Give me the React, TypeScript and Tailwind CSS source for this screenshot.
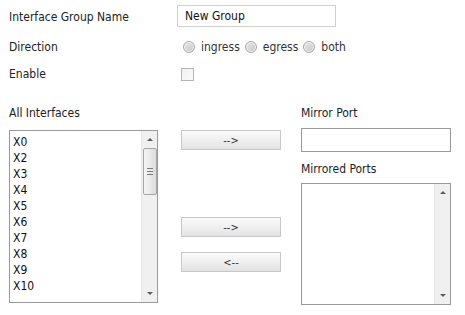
import React from 'react'

const font = { fontFamily: '"DejaVu Sans Condensed", "Liberation Sans", sans-serif' }

const interfaces = ['X0', 'X2', 'X3', 'X4', 'X5', 'X6', 'X7', 'X8', 'X9', 'X10']

function Radio({ label }: { label: string }) {
  return (
    <span className="flex items-center gap-[6px]">
      <span className="w-[12px] h-[12px] rounded-full border border-[#a8a8a8] bg-gradient-to-br from-[#e6e6e6] to-[#c9c9c9] shadow-[inset_0_0_0_1px_#f4f4f4]" />
      <span className="text-[#333]">{label}</span>
    </span>
  )
}

function ScrollTrack({ thumb }: { thumb?: boolean }) {
  return (
    <div className="w-[16px] h-full bg-[#f0f0f0] border-l border-[#e6e6e6] flex flex-col items-center">
      <div className="h-[17px] flex items-center justify-center">
        <span className="w-0 h-0 border-l-[3px] border-r-[3px] border-b-[3px] border-l-transparent border-r-transparent border-b-[#5a5a5a]" />
      </div>
      {thumb && (
        <div className="w-[14px] h-[47px] rounded-[2px] border border-[#a5a5a5] bg-gradient-to-r from-[#f5f5f5] to-[#dcdcdc] flex flex-col items-center justify-center gap-[2px]">
          <span className="w-[6px] h-px bg-[#7a7a7a]" />
          <span className="w-[6px] h-px bg-[#7a7a7a]" />
          <span className="w-[6px] h-px bg-[#7a7a7a]" />
        </div>
      )}
      <div className="flex-1" />
      <div className="h-[17px] flex items-center justify-center">
        <span className="w-0 h-0 border-l-[3px] border-r-[3px] border-t-[3px] border-l-transparent border-r-transparent border-t-[#5a5a5a]" />
      </div>
    </div>
  )
}

function ArrowButton({ label }: { label: string }) {
  return (
    <button className="w-[100px] h-[20px] border border-[#c8c8c8] bg-gradient-to-b from-[#fbfbfb] to-[#e3e3e3] text-[11px] text-[#333] leading-none">
      {label}
    </button>
  )
}

export default function App() {
  return (
    <div className="w-[465px] h-[315px] bg-white text-[12px] text-[#222] pl-[9px] pt-[5px]" style={font}>
      {/* Top form rows */}
      <div className="flex items-center h-[22px]">
        <span className="w-[168px] pt-[2px]">Interface Group Name</span>
        <div className="w-[159px] h-[22px] border border-[#cfcfcf] flex items-center px-[7px] text-[#111]">New Group</div>
      </div>
      <div className="flex items-center h-[20px] mt-[10px]">
        <span className="w-[174px]">Direction</span>
        <div className="flex items-center gap-[5px]">
          <Radio label="ingress" />
          <Radio label="egress" />
          <Radio label="both" />
        </div>
      </div>
      <div className="flex items-center h-[20px] mt-[7px]">
        <span className="w-[172px]">Enable</span>
        <span className="w-[13px] h-[13px] border border-[#b5b5b5] bg-gradient-to-br from-[#f0f0f0] to-[#fafafa]" />
      </div>

      {/* Interface lists */}
      <div className="flex mt-[21px]">
        <div className="w-[149px] flex flex-col">
          <span className="h-[16px] leading-[16px]">All Interfaces</span>
          <div className="mt-[9px] h-[173px] border border-[#9a9a9a] flex">
            <div className="flex-1 pl-[3px] pt-[3px] text-[#111]">
              {interfaces.map(i => (
                <div key={i} className="h-[16px] leading-[16px]">{i}</div>
              ))}
            </div>
            <ScrollTrack thumb />
          </div>
        </div>

        <div className="ml-[23px] pt-[25px] flex flex-col">
          <ArrowButton label="-->" />
          <div className="mt-[67px]">
            <ArrowButton label="-->" />
          </div>
          <div className="mt-[15px]">
            <ArrowButton label="<--" />
          </div>
        </div>

        <div className="ml-[20px] w-[150px] flex flex-col">
          <span className="h-[16px] leading-[16px]">Mirror Port</span>
          <div className="mt-[7px] h-[24px] border border-[#9a9a9a]" />
          <span className="mt-[9px] h-[16px] leading-[16px]">Mirrored Ports</span>
          <div className="mt-[6px] h-[122px] border border-[#9a9a9a] flex">
            <div className="flex-1" />
            <ScrollTrack />
          </div>
        </div>
      </div>
    </div>
  )
}
